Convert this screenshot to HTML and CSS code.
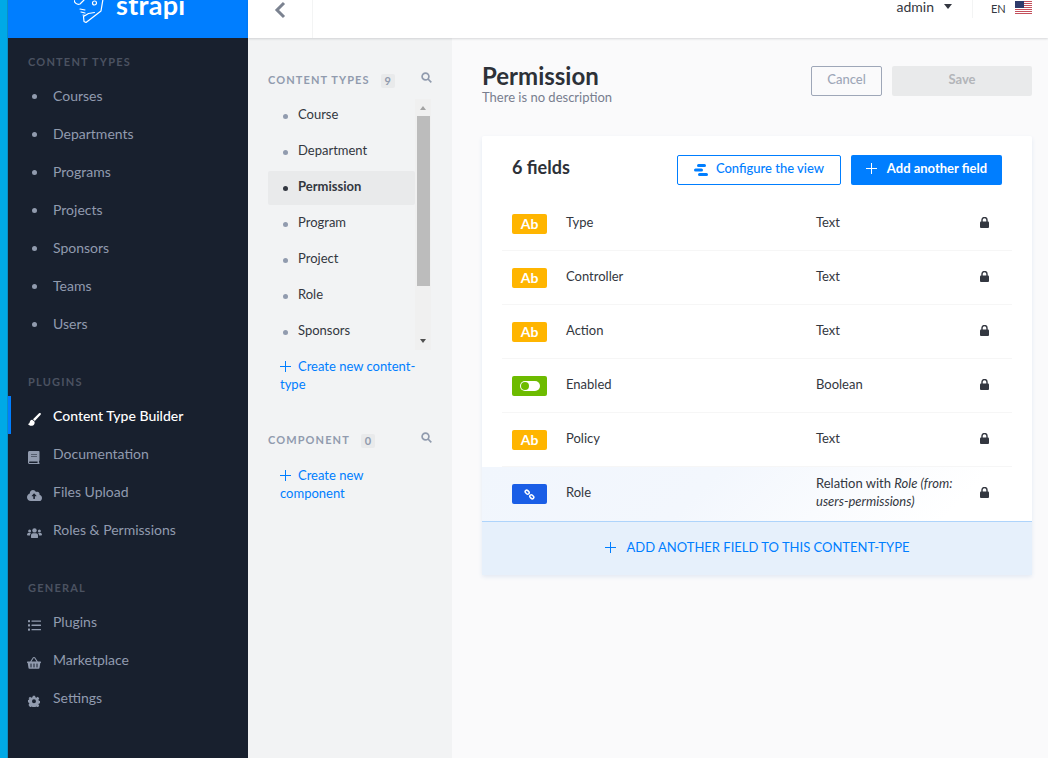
FILE: index.html
```html
<!DOCTYPE html>
<html lang="en">
<head>
    <meta charset="UTF-8">
    <title>Permission - Content Type Builder</title>
    <link rel="stylesheet" href="styles.css">
</head>
<body>
    <div class="edge"></div>
    <aside class="sidebar">
        <div class="brand">
            <svg class="brand-icon" width="30" height="24" viewBox="0 0 30 24" fill="none" stroke="#fff" stroke-width="1.2" stroke-linejoin="round" stroke-linecap="round">
                <path d="M0 0c0 4 3 6 6 5l4-4"/>
                <path d="M29 0l-2 12-15 11.500-2-1-.5-5 5-3 6-1"/>
                <circle cx="20.500" cy="4" r="2"/>
                <path d="M6 10l5 1M7 13l4 1M9 16l2 .5"/>
            </svg>
            <span class="brand-name">strapi</span>
        </div>
        <h3 class="nav-title first">Content Types</h3>
        <ul class="nav">
            <li class="nav-item"><span class="nav-icon"><i class="dot"></i></span>Courses</li>
            <li class="nav-item"><span class="nav-icon"><i class="dot"></i></span>Departments</li>
            <li class="nav-item"><span class="nav-icon"><i class="dot"></i></span>Programs</li>
            <li class="nav-item"><span class="nav-icon"><i class="dot"></i></span>Projects</li>
            <li class="nav-item"><span class="nav-icon"><i class="dot"></i></span>Sponsors</li>
            <li class="nav-item"><span class="nav-icon"><i class="dot"></i></span>Teams</li>
            <li class="nav-item"><span class="nav-icon"><i class="dot"></i></span>Users</li>
        </ul>
        <h3 class="nav-title">Plugins</h3>
        <ul class="nav">
            <li class="nav-item active">
                <span class="nav-icon">
                    <svg width="13" height="13" viewBox="0 0 13 13" fill="#fff"><path d="M12.600.3c-.5-.5-1.300-.4-1.800.1L5 6.300l1.800 1.700 5.600-6c.5-.5.600-1.200.2-1.700z"/><path d="M4.200 6.800C2.400 7 1.800 8.400 1.600 9.600 1.500 10.500.8 10.900 0 11.100c1 1.700 3.400 2.200 5 1.300 1.500-.8 2-2.500 1.400-3.800z"/></svg>
                </span>Content Type Builder
            </li>
            <li class="nav-item">
                <span class="nav-icon">
                    <svg width="12" height="13" viewBox="0 0 12 13" fill="#919bae"><path d="M1.500 0h9.300c.4 0 .7.300.7.700v8.600c0 .3-.2.500-.4.600-.1.400-.1 1.300 0 1.700.2.200.4.400.4.600v.5c0 .2-.2.300-.4.300H1.500C.7 13 0 12.300 0 11.500v-10C0 .700.700 0 1.500 0zM3 3.300v.5h6v-.5zM3 5v.5h6V5zm-1.300 5.500c-.4 0-.7.300-.7.700s.300.700.700.700h7.900c-.1-.4-.1-1 0-1.400z"/></svg>
                </span>Documentation
            </li>
            <li class="nav-item">
                <span class="nav-icon wide">
                    <svg width="15" height="11" viewBox="0 0 15 11" fill="#919bae"><path d="M12.500 4.800c.1-.3.100-.5.100-.8 0-1.300-1-2.300-2.300-2.300-.5 0-.9.100-1.300.4C8.400.9 7.300.1 6 .1 4.200.1 2.800 1.600 2.800 3.300v.3C1.200 4.100 0 5.600 0 7.300 0 9.400 1.700 11 3.800 11h8.600c1.400 0 2.600-1.200 2.600-3.100 0-1.400-1-2.700-2.500-3.100zM9.200 6.300H7.900v2.300c0 .2-.2.300-.3.300h-1c-.2 0-.3-.1-.3-.3V6.300H5c-.3 0-.5-.4-.2-.6l2-2.100c.2-.2.400-.2.600 0l2 2.100c.3.200.1.600-.2.600z"/></svg>
                </span>Files Upload
            </li>
            <li class="nav-item">
                <span class="nav-icon wide">
                    <svg width="15" height="10" viewBox="0 0 15 10" fill="#919bae"><circle cx="2.600" cy="3" r="1.500"/><circle cx="12.400" cy="3" r="1.500"/><circle cx="7.500" cy="2.400" r="2.200"/><path d="M4 9.500V7.600C4 6 5 5.300 6 5.300h3c1 0 2 .7 2 2.300v1.900c0 .3-.2.500-.5.500h-6c-.3 0-.5-.2-.5-.5z"/><path d="M0 6.600C0 5.400.8 4.900 1.500 4.900h1.600c.2 0 .5.100.7.300-.5.500-.8 1.300-.8 2.200H.6c-.3 0-.6-.3-.6-.8zM15 6.600c0-1.200-.8-1.700-1.500-1.700h-1.600c-.2 0-.5.100-.7.300.5.500.8 1.300.8 2.200h2.400c.3 0 .6-.3.600-.8z"/></svg>
                </span>Roles &amp; Permissions
            </li>
        </ul>
        <h3 class="nav-title">General</h3>
        <ul class="nav">
            <li class="nav-item">
                <span class="nav-icon">
                    <svg width="13" height="11" viewBox="0 0 13 11" fill="#919bae"><rect y="0" width="2" height="2.200" rx=".4"/><rect y="4.200" width="2" height="2.200" rx=".4"/><rect y="8.500" width="2" height="2.200" rx=".4"/><rect x="3.500" y=".4" width="9.500" height="1.400" rx=".3"/><rect x="3.500" y="4.600" width="9.500" height="1.400" rx=".3"/><rect x="3.500" y="8.900" width="9.500" height="1.400" rx=".3"/></svg>
                </span>Plugins
            </li>
            <li class="nav-item">
                <span class="nav-icon wide">
                    <svg width="14" height="12" viewBox="0 0 14 12" fill="#919bae"><path d="M.5 4.400h2.700L6 .3c.2-.3.500-.3.700-.2.200.2.300.4.200.7L4.500 4.400h5L7.100.8c-.1-.3 0-.5.200-.7.200-.1.500-.1.700.2l2.800 4.100h2.700c.3 0 .5.200.5.500v.6c0 .3-.2.500-.5.500h-.2l-.8 5c0 .4-.4.700-.8.700H2.300c-.4 0-.8-.3-.8-.7l-.8-5H.5c-.3 0-.5-.2-.5-.5v-.6c0-.3.200-.5.500-.5z"/><path d="M4 7v3M7 7v3M10 7v3" stroke="#18202e" stroke-width="1" stroke-linecap="round"/></svg>
                </span>Marketplace
            </li>
            <li class="nav-item">
                <span class="nav-icon">
                    <svg width="12" height="12" viewBox="0 0 24 24" fill="#919bae"><path fill-rule="evenodd" d="M9.500 0h5l.7 3.400 2.300 1 3-1.900 3.500 3.500-1.900 3 1 2.300 3.400.7v5l-3.400.7-1 2.300 1.900 3-3.500 3.500-3-1.900-2.300 1-.7 3.400h-5l-.7-3.400-2.300-1-3 1.900L-.5 21l1.900-3-1-2.300L-3 15v-5l3.400-.7 1-2.300L-.5 6 3 2.500l3 1.900 2.300-1zM12 8a4.500 4.500 0 100 9 4.500 4.500 0 000-9z" transform="translate(1.400 1.400) scale(.88)"/></svg>
                </span>Settings
            </li>
        </ul>
    </aside>

    <div class="content">
        <header class="topbar">
            <div class="back">
                <svg width="12" height="18" viewBox="0 0 12 18" fill="none" stroke="#7b8290" stroke-width="3"><path d="M10 2L3 9l7 7"/></svg>
            </div>
            <div class="user">admin<i class="caret"></i></div>
            <div class="lang">EN
                <svg class="flag" width="17" height="13" viewBox="0 0 17 13">
                    <rect width="17" height="13" fill="#fff"/>
                    <path d="M0 .5h17M0 2.500h17M0 4.500h17M0 6.500h17M0 8.500h17M0 10.500h17M0 12.500h17" stroke="#c4505c" stroke-width="1"/>
                    <rect width="9" height="7" fill="#2d3a6b"/>
                </svg>
            </div>
        </header>

        <div class="workspace">
            <section class="left-menu">
                <div class="menu-head">
                    <h3>Content Types</h3>
                    <span class="count">9</span>
                    <svg class="menu-search" width="11" height="11" viewBox="0 0 11 11" fill="none" stroke="#919bae" stroke-width="1.700"><circle cx="4.500" cy="4.500" r="3.400"/><path d="M7 7l3.300 3.300"/></svg>
                </div>
                <div class="menu-scroll">
                    <ul class="menu-list">
                        <li class="menu-item"><i class="dot"></i>Course</li>
                        <li class="menu-item"><i class="dot"></i>Department</li>
                        <li class="menu-item selected"><i class="dot"></i>Permission</li>
                        <li class="menu-item"><i class="dot"></i>Program</li>
                        <li class="menu-item"><i class="dot"></i>Project</li>
                        <li class="menu-item"><i class="dot"></i>Role</li>
                        <li class="menu-item"><i class="dot"></i>Sponsors</li>
                    </ul>
                    <div class="scrollbar">
                        <i class="arrow-up"></i>
                        <div class="thumb"></div>
                        <i class="arrow-down"></i>
                    </div>
                </div>
                <a class="menu-add"><i class="plus"></i>Create new content-type</a>
                <div class="menu-head second">
                    <h3>Component</h3>
                    <span class="count">0</span>
                    <svg class="menu-search" width="11" height="11" viewBox="0 0 11 11" fill="none" stroke="#919bae" stroke-width="1.700"><circle cx="4.500" cy="4.500" r="3.400"/><path d="M7 7l3.300 3.300"/></svg>
                </div>
                <a class="menu-add short"><i class="plus"></i>Create new component</a>
            </section>

            <main class="main">
                <div class="page-head">
                    <div>
                        <h1>Permission</h1>
                        <p>There is no description</p>
                    </div>
                    <div class="page-actions">
                        <button class="btn-cancel">Cancel</button>
                        <button class="btn-save">Save</button>
                    </div>
                </div>

                <div class="card">
                    <div class="card-head">
                        <h2>6 fields</h2>
                        <button class="btn-outline">
                            <svg width="14" height="12" viewBox="0 0 14 12" fill="#007eff"><rect x="3" y="0" width="9" height="3" rx="1.500"/><rect x="0" y="4.500" width="9" height="3" rx="1.500"/><rect x="4" y="9" width="10" height="3" rx="1.500"/></svg>
                            Configure the view
                        </button>
                        <button class="btn-primary"><i class="plus"></i>Add another field</button>
                    </div>

                    <div class="row"><div class="row-inner"><span class="badge text">Ab</span><span class="field-name">Type</span><span class="field-type">Text</span><svg class="lock" width="9" height="11" viewBox="0 0 9 11"><path d="M2 5V3a2.500 2.500 0 015 0v2" fill="none" stroke="#333740" stroke-width="1.400"/><rect y="4.500" width="9" height="6.500" rx="1" fill="#333740"/></svg></div></div>
                    <div class="row"><div class="row-inner"><span class="badge text">Ab</span><span class="field-name">Controller</span><span class="field-type">Text</span><svg class="lock" width="9" height="11" viewBox="0 0 9 11"><path d="M2 5V3a2.500 2.500 0 015 0v2" fill="none" stroke="#333740" stroke-width="1.400"/><rect y="4.500" width="9" height="6.500" rx="1" fill="#333740"/></svg></div></div>
                    <div class="row"><div class="row-inner"><span class="badge text">Ab</span><span class="field-name">Action</span><span class="field-type">Text</span><svg class="lock" width="9" height="11" viewBox="0 0 9 11"><path d="M2 5V3a2.500 2.500 0 015 0v2" fill="none" stroke="#333740" stroke-width="1.400"/><rect y="4.500" width="9" height="6.500" rx="1" fill="#333740"/></svg></div></div>
                    <div class="row"><div class="row-inner"><span class="badge bool"><i class="toggle"></i></span><span class="field-name">Enabled</span><span class="field-type">Boolean</span><svg class="lock" width="9" height="11" viewBox="0 0 9 11"><path d="M2 5V3a2.500 2.500 0 015 0v2" fill="none" stroke="#333740" stroke-width="1.400"/><rect y="4.500" width="9" height="6.500" rx="1" fill="#333740"/></svg></div></div>
                    <div class="row"><div class="row-inner"><span class="badge text">Ab</span><span class="field-name">Policy</span><span class="field-type">Text</span><svg class="lock" width="9" height="11" viewBox="0 0 9 11"><path d="M2 5V3a2.500 2.500 0 015 0v2" fill="none" stroke="#333740" stroke-width="1.400"/><rect y="4.500" width="9" height="6.500" rx="1" fill="#333740"/></svg></div></div>
                    <div class="row relation"><div class="row-inner"><span class="badge link">
                        <svg width="11" height="11" viewBox="0 0 11 11" fill="none" stroke="#fff" stroke-width="1.500"><rect x="-2.200" y="-1.500" width="4.400" height="3" rx="1.500" transform="translate(3.200 3.200) rotate(45)"/><rect x="-2.200" y="-1.500" width="4.400" height="3" rx="1.500" transform="translate(7.800 7.800) rotate(45)"/></svg>
                    </span><span class="field-name">Role</span><span class="field-type">Relation with <em>Role (from: users-permissions)</em></span><svg class="lock" width="9" height="11" viewBox="0 0 9 11"><path d="M2 5V3a2.500 2.500 0 015 0v2" fill="none" stroke="#333740" stroke-width="1.400"/><rect y="4.500" width="9" height="6.500" rx="1" fill="#333740"/></svg></div></div>

                    <div class="card-foot"><i class="plus"></i>ADD ANOTHER FIELD TO THIS CONTENT-TYPE</div>
                </div>
            </main>
        </div>
    </div>
</body>
</html>
```

FILE: styles.css
```css
* {
    box-sizing: border-box;
}
html, body {
    height: 100%;
}
body {
    margin: 0;
    display: flex;
    height: 758px;
    overflow: hidden;
    font-family: Lato, "Open Sans", sans-serif;
    font-size: 13px;
    color: #333740;
    background: #fafafb;
}
ul {
    list-style: none;
    margin: 0;
    padding: 0;
}
button {
    font-family: inherit;
    cursor: pointer;
}
.edge {
    width: 8px;
    flex: none;
    background: #00a9e6;
    border-right: 1px solid #0b8fc4;
}
.plus {
    display: inline-block;
    width: 11px;
    height: 11px;
    flex: none;
    background:
        linear-gradient(currentColor, currentColor) center / 11px 1px no-repeat,
        linear-gradient(currentColor, currentColor) center / 1px 11px no-repeat;
}

/* sidebar */
.sidebar {
    width: 240px;
    flex: none;
    background: #18202e;
}
.brand {
    height: 38px;
    background: #007eff;
    display: flex;
    align-items: flex-end;
    padding: 0 0 25px 66px;
    overflow: hidden;
}
.brand-icon {
    flex: none;
    margin-bottom: -10px;
}
.brand-name {
    margin-left: 12px;
    color: #fff;
    font-size: 27px;
    font-weight: 700;
    line-height: 16px;
    letter-spacing: .3px;
}
.nav-title {
    margin: 0;
    padding: 33px 0 0 20px;
    height: 54px;
    font-size: 11px;
    line-height: 14px;
    font-weight: 700;
    letter-spacing: 1.2px;
    text-transform: uppercase;
    color: #4b5261;
}
.nav-title.first {
    height: 38px;
    padding-top: 17px;
}
.nav-item {
    height: 38px;
    display: flex;
    align-items: center;
    padding-left: 20px;
    font-size: 14px;
    color: #919bae;
}
.nav-item.active {
    color: #fff;
    font-weight: 500;
    border-left: 3px solid #007eff;
    padding-left: 17px;
}
.nav-icon {
    width: 25px;
    height: 16px;
    margin-top: 8px;
    display: flex;
    align-items: center;
    flex: none;
}
.nav-icon.wide {
    margin-left: -1px;
    width: 26px;
}
.nav-icon .dot {
    margin-left: 4px;
    margin-top: -6px;
    background: #919bae;
}
.dot {
    display: block;
    width: 5px;
    height: 5px;
    border-radius: 50%;
    flex: none;
}

/* top bar */
.content {
    flex: 1;
    display: flex;
    flex-direction: column;
    min-width: 0;
}
.topbar {
    height: 38px;
    flex: none;
    display: flex;
    align-items: flex-start;
    background: #fff;
    box-shadow: 0 1px 2px rgba(40, 42, 49, .16);
    position: relative;
}
.back {
    width: 65px;
    height: 38px;
    border-right: 1px solid #f3f4f4;
    padding: 1px 0 0 26px;
}
.user {
    margin-left: auto;
    height: 14px;
    display: flex;
    align-items: center;
    font-size: 14px;
    color: #333740;
    line-height: 14px;
}
.caret {
    width: 0;
    height: 0;
    margin-left: 10px;
    margin-top: -1px;
    border-left: 4.500px solid transparent;
    border-right: 4.500px solid transparent;
    border-top: 5px solid #333740;
}
.lang {
    width: 76px;
    height: 18px;
    margin-left: 20px;
    border-left: 1px solid #f3f4f4;
    padding: 0 0 2px 18px;
    display: flex;
    align-items: center;
    font-size: 11px;
    color: #333740;
}
.flag {
    margin-left: 9px;
    margin-top: -1px;
}

/* content types menu */
.workspace {
    flex: 1;
    display: flex;
    min-height: 0;
}
.left-menu {
    width: 204px;
    flex: none;
    background: #f2f3f4;
    padding: 33px 20px 0;
}
.menu-head {
    height: 16px;
    display: flex;
    align-items: center;
}
.menu-head.second {
    margin-top: 38px;
}
.menu-head h3 {
    margin: 0;
    font-size: 11px;
    font-weight: 700;
    letter-spacing: 1.1px;
    text-transform: uppercase;
    color: #919bae;
}
.count {
    margin-left: 11px;
    margin-top: 3px;
    width: 14px;
    height: 14px;
    background: #e9eaeb;
    border-radius: 2px;
    font-size: 11px;
    font-weight: 700;
    line-height: 14px;
    text-align: center;
    color: #919bae;
}
.menu-search {
    margin-left: auto;
    margin-top: -3px;
}
.menu-scroll {
    display: flex;
    margin-top: 12px;
    height: 251px;
    width: 163px;
    overflow: hidden;
}
.menu-list {
    width: 147px;
    flex: none;
}
.menu-item {
    height: 34px;
    margin-bottom: 2px;
    display: flex;
    align-items: center;
    padding: 0 0 4px 15px;
    font-size: 13px;
    color: #333740;
    border-radius: 2px;
}
.menu-item .dot {
    width: 5px;
    height: 5px;
    margin-right: 10px;
    margin-top: 4px;
    background: #919bae;
}
.menu-item.selected {
    background: #e9eaeb;
    font-weight: 700;
}
.menu-item.selected .dot {
    background: #333740;
}
.scrollbar {
    width: 16px;
    flex: none;
    background: #f0f0f0;
    display: flex;
    flex-direction: column;
    align-items: center;
    padding-top: 7px;
}
.thumb {
    width: 13px;
    height: 170px;
    margin: 6px 0 53px 1px;
    background: #bcbcbc;
}
.arrow-up {
    border-left: 3.500px solid transparent;
    border-right: 3.500px solid transparent;
    border-bottom: 4px solid #a3a3a3;
}
.arrow-down {
    border-left: 3.500px solid transparent;
    border-right: 3.500px solid transparent;
    border-top: 4px solid #505050;
}
.menu-add {
    display: block;
    margin: 7px 0 0 12px;
    width: 150px;
    font-size: 13px;
    line-height: 18px;
    color: #007eff;
}
.menu-add.short {
    width: 120px;
    margin-top: 19px;
}
.menu-add .plus {
    margin-right: 7px;
    vertical-align: -0.5px;
}

/* main */
.main {
    flex: 1;
    min-width: 0;
    padding: 24px 16px 0 30px;
    background: #fafafb;
}
.page-head {
    display: flex;
    justify-content: space-between;
    align-items: flex-start;
    height: 74px;
}
.page-head h1 {
    margin: 0;
    font-size: 24px;
    line-height: 28px;
    font-weight: 700;
    color: #2d3138;
}
.page-head p {
    margin: 0;
    font-size: 13px;
    line-height: 14px;
    color: #787e8f;
}
.page-actions {
    display: flex;
    gap: 10px;
    padding-top: 4px;
}
.btn-cancel {
    width: 71px;
    height: 30px;
    padding: 0 0 4px;
    background: transparent;
    border: 1px solid #9ea7b8;
    border-radius: 2px;
    font-size: 13px;
    font-weight: 500;
    color: #9ea7b8;
}
.btn-save {
    width: 140px;
    height: 30px;
    padding: 0 0 4px;
    background: #e9eaeb;
    border: 0;
    border-radius: 2px;
    font-size: 13px;
    font-weight: 700;
    color: #b3b5b9;
}
.card {
    background: #fff;
    border-radius: 2px;
    box-shadow: 0 2px 4px #e3e9f3;
}
.card-head {
    height: 61px;
    display: flex;
    align-items: center;
    padding: 0 30px;
    gap: 10px;
}
.card-head h2 {
    margin: 0 auto 0 0;
    font-size: 18px;
    font-weight: 700;
    color: #2d3138;
}
.btn-outline, .btn-primary {
    height: 30px;
    margin-top: 7px;
    padding: 0 0 4px;
    border-radius: 2px;
    font-size: 13px;
    display: flex;
    align-items: center;
    justify-content: center;
}
.btn-outline {
    width: 164px;
    background: #fff;
    border: 1px solid #007eff;
    color: #007eff;
    font-weight: 500;
    gap: 8px;
}
.btn-outline svg {
    margin-top: 4px;
}
.btn-primary {
    width: 151px;
    background: #007eff;
    border: 0;
    color: #fff;
    font-weight: 700;
}
.btn-primary .plus {
    margin-right: 10px;
}
.row {
    height: 54px;
    padding: 0 20px;
}
.row-inner {
    height: 54px;
    display: flex;
    align-items: center;
    border-bottom: 1px solid #f6f6f6;
}
.row.relation {
    background: linear-gradient(315deg, #fff 0%, #fff 15%, #f3f7fd 60%, #f1f6fd 100%);
}
.row.relation .row-inner {
    border-bottom-color: transparent;
}
.badge {
    width: 35px;
    height: 20px;
    margin-left: 10px;
    margin-top: 1px;
    border-radius: 2px;
    display: flex;
    align-items: center;
    justify-content: center;
    flex: none;
    color: #fff;
    font-size: 14px;
    font-weight: 700;
}
.badge.text {
    padding-bottom: 2px;
    background: #ffb500;
}
.badge.bool {
    background: #6dbb00;
}
.badge.link {
    background: #1a5ee6;
}
.toggle {
    width: 20px;
    height: 10px;
    border-radius: 5px;
    background: #fff;
    position: relative;
}
.toggle::before {
    content: "";
    position: absolute;
    left: 1px;
    top: 1px;
    width: 8px;
    height: 8px;
    border-radius: 50%;
    background: #6dbb00;
}
.field-name {
    width: 250px;
    margin: 0 0 3px 19px;
    flex: none;
    font-size: 13px;
}
.field-type {
    width: 150px;
    margin-bottom: 3px;
    flex: none;
    font-size: 13px;
    line-height: 18px;
}
.lock {
    margin: 0 0 2px 14px;
    flex: none;
}
.card-foot {
    height: 54px;
    padding-bottom: 3px;
    background: #e6f0fb;
    border-top: 1px solid #aed4fb;
    display: flex;
    align-items: center;
    justify-content: center;
    font-size: 13px;
    color: #007eff;
}
.card-foot .plus {
    margin-right: 11px;
}
```
